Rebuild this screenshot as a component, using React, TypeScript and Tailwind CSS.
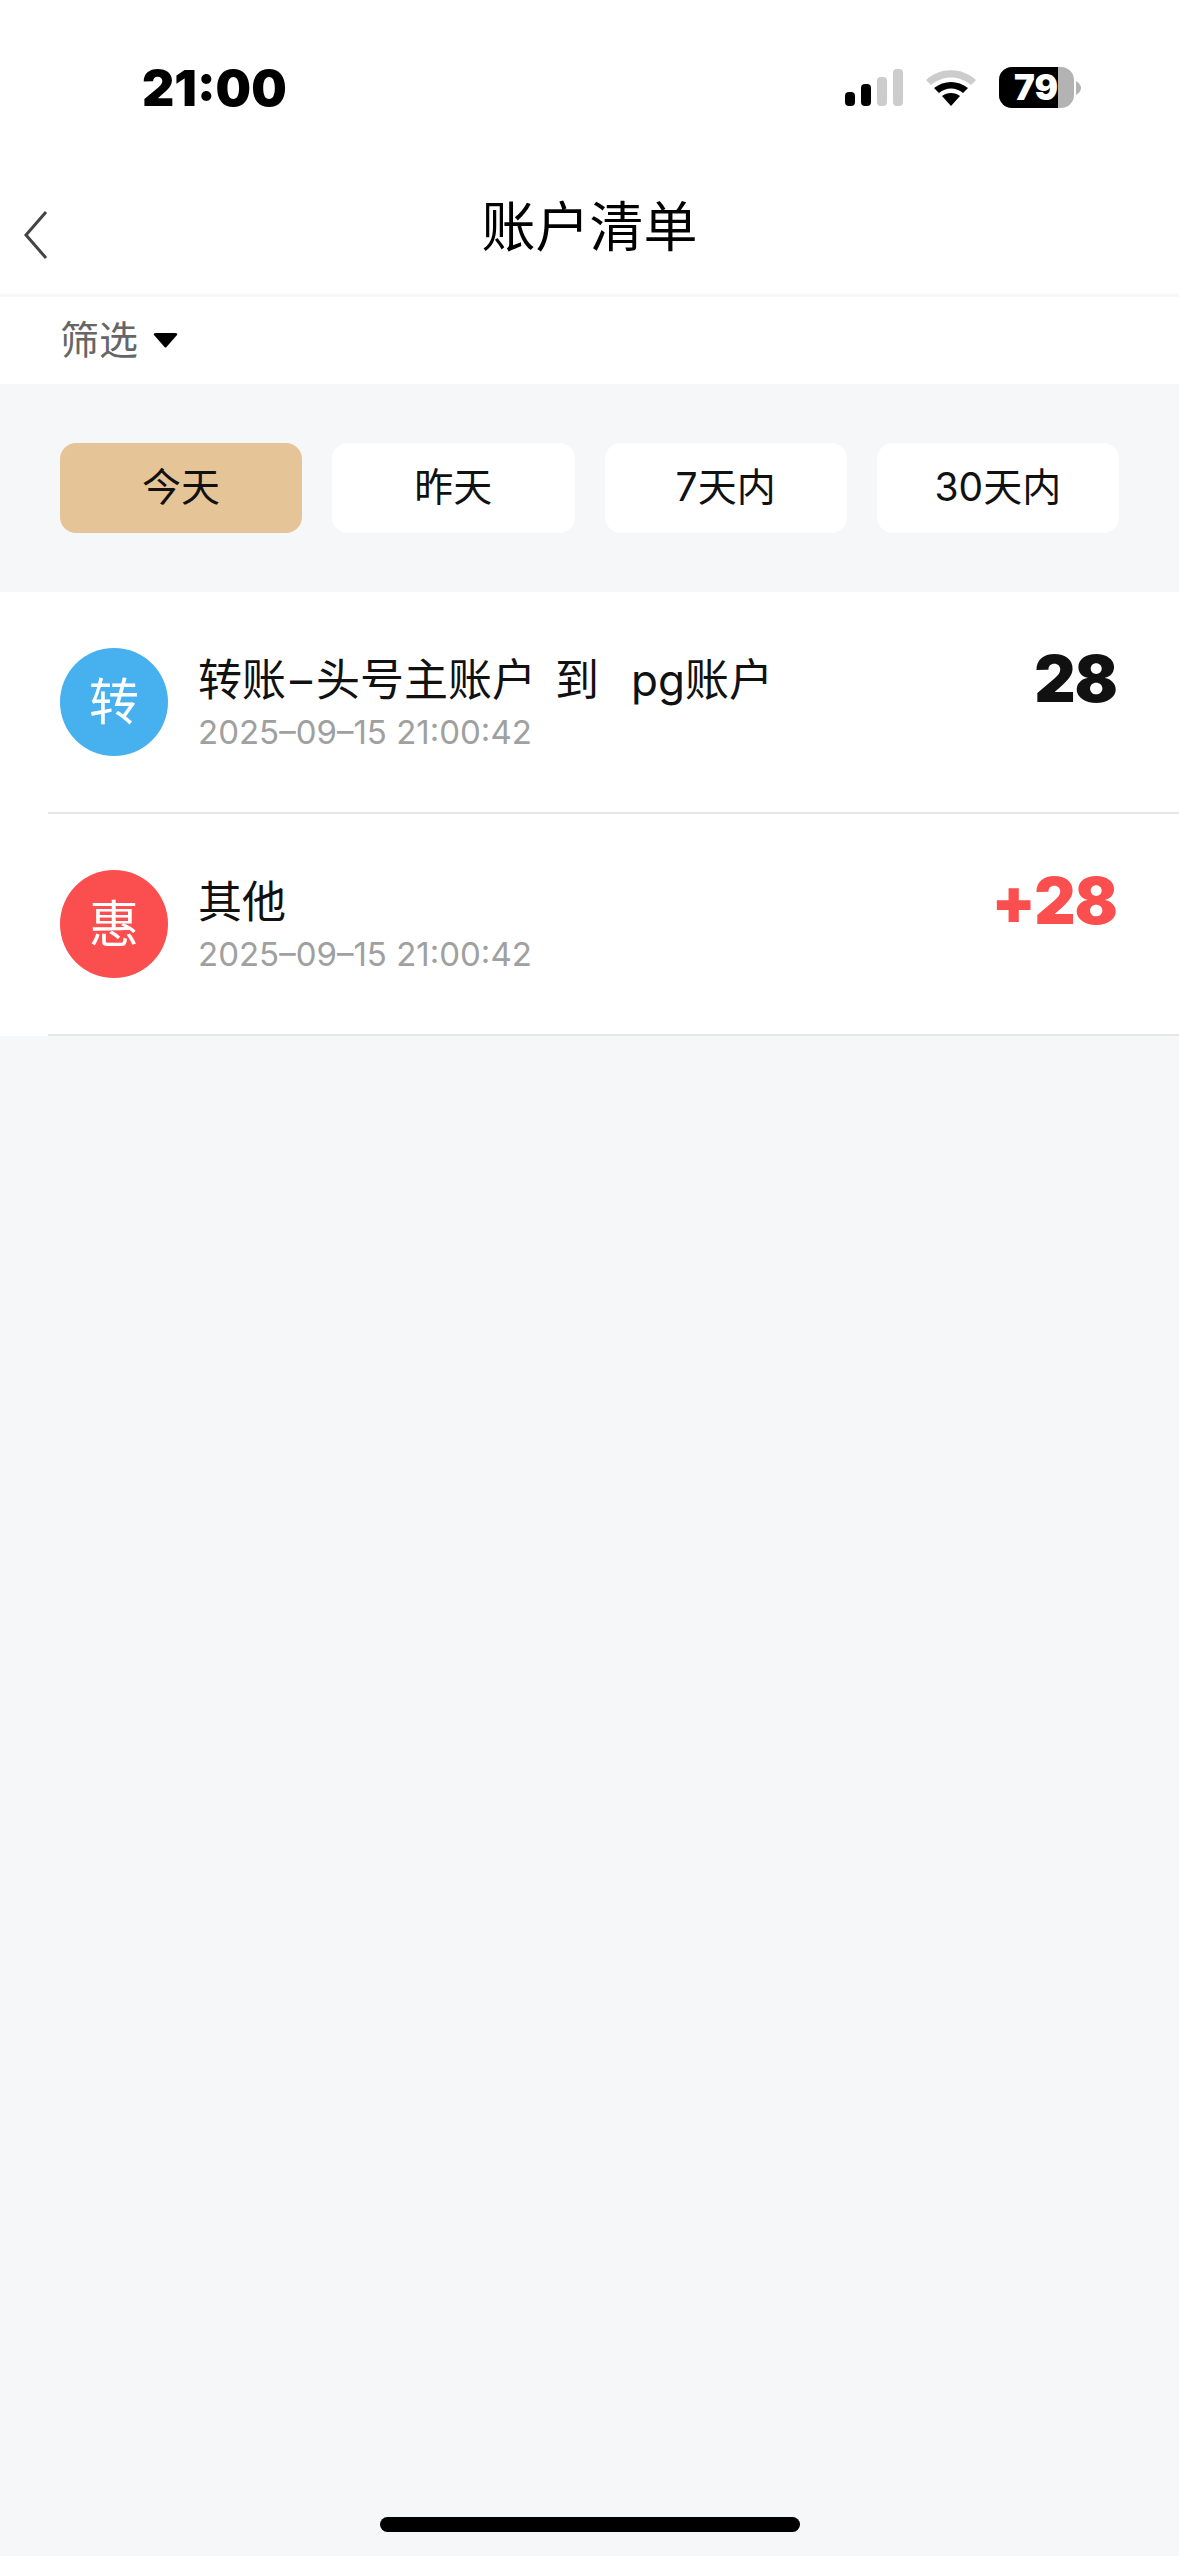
const cjk = "font-['Inter','Noto_Sans_CJK_SC',sans-serif]";

function StatusBar() {
  return (
    <div className="flex h-[170px] items-start justify-between pl-[142px] pr-[98px] pt-[53px]">
      <span className="font-['Inter',sans-serif] text-[50px] leading-[70px] font-black text-black">21:00</span>
      <div className="mt-[14px] flex items-center">
        <svg width="59" height="38" viewBox="0 0 59 38" className="mr-[21px]">
          <rect x="0" y="23" width="10" height="14" rx="4" fill="#000" />
          <rect x="16" y="15" width="10" height="22" rx="4" fill="#000" />
          <rect x="32" y="8" width="10" height="29" rx="4" fill="#ccc" />
          <rect x="48" y="0" width="10" height="37" rx="4" fill="#ccc" />
        </svg>
        <svg width="52" height="38" viewBox="0 0 52 38" className="mr-[22px]">
          <path d="M1 11 C15 -2 37 -2 51 11 L46 16 C34 6 18 6 6 16 Z" fill="#ccc" />
          <path d="M9 19 C19 11 33 11 43 19 L38 24 C31 18 21 18 14 24 Z" fill="#000" />
          <path d="M17 27 C22 23 30 23 35 27 L26 37 Z" fill="#000" />
        </svg>
        <div className="relative flex h-[41px] w-[75px] overflow-hidden rounded-[13px] bg-[#b3b3b3]">
          <div className="flex h-full w-[59px] items-center justify-end bg-black">
            <span className="font-['Inter',sans-serif] text-[35px] leading-none font-black text-white">79</span>
          </div>
        </div>
        <svg width="5" height="14" viewBox="0 0 5 14" className="ml-[2px]"><path d="M0 0 C3 2 5 4 5 7 C5 10 3 12 0 14 Z" fill="#b3b3b3" /></svg>
      </div>
    </div>
  );
}

function Row({ badge, color, title, amount, amountColor }: { badge: string; color: string; title: React.ReactNode; amount: string; amountColor: string }) {
  return (
    <div className="ml-[48px] flex h-[222px] items-start border-b-2 border-[#e5e6e8] pl-[12px] pr-[62px] pt-[56px]">
      <div className={`flex h-[108px] w-[108px] items-center justify-center rounded-full text-[50px] text-white ${color}`}>{badge}</div>
      <div className="ml-[30px] flex-1">
        <div className="mt-[3px] text-[44px] leading-[58px] whitespace-pre text-[#111]">{title}</div>
        <div className="mt-[2px] text-[33px] leading-[42px] text-[#a0a0a0]">2025–09–15 21:00:42</div>
      </div>
      <div className={`mt-[-1px] font-['Inter',sans-serif] text-[64px] leading-[64px] font-black tracking-[-1px] ${amountColor}`}>{amount}</div>
    </div>
  );
}

export default function App() {
  const chips = ["今天", "昨天", "7天内", "30天内"];
  return (
    <div className={`flex h-[2556px] w-[1179px] flex-col overflow-hidden bg-[#f6f7f9] ${cjk}`}>
      <div className="bg-white">
        <StatusBar />
        <div className="relative flex h-[127px] items-start justify-center border-b-[3px] border-[#f6f7f9]">
          <svg width="26" height="50" viewBox="0 0 26 50" className="absolute left-[23px] top-[40px]">
            <path d="M23 2 L3 25 L23 48" fill="none" stroke="#444" strokeWidth="3" />
          </svg>
          <span className="mt-[23px] text-[54px] leading-[70px] text-black">账户清单</span>
        </div>
        <div className="flex h-[87px] items-center pl-[60px]">
          <span className="mt-[-2px] text-[39px] leading-[50px] text-[#666]">筛选</span>
          <svg width="25" height="16" viewBox="0 0 25 16" className="ml-[15px]"><path d="M1 2 Q0 0 3 0 L22 0 Q25 0 24 2 L13.5 14 Q12.5 15 11.5 14 Z" fill="#000" /></svg>
        </div>
      </div>
      <div className="grid h-[208px] grid-cols-4 content-start gap-x-[30px] px-[60px] pt-[59px]">
        {chips.map((c, i) => (
          <div key={c} className={`flex h-[90px] items-center justify-center rounded-[16px] pb-[2px] text-[39px] text-[#111] ${i === 0 ? "bg-[#e5c598]" : "bg-white"}`}>{c}</div>
        ))}
      </div>
      <div className="bg-white">
        <Row
          badge="转"
          color="bg-[#47b0ee]"
          title={<>转账<span className="mx-[4px]">–</span>头号主账户<span className="inline-block w-[19px]" />到<span className="inline-block w-[32px]" />pg账户</>}
          amount="28"
          amountColor="text-[#111]"
        />
        <Row badge="惠" color="bg-[#fb4e4e]" title="其他" amount="+28" amountColor="text-[#fb4e4e]" />
      </div>
      <div className="mt-auto mb-[24px] h-[15px] w-[420px] self-center rounded-full bg-black" />
    </div>
  );
}
